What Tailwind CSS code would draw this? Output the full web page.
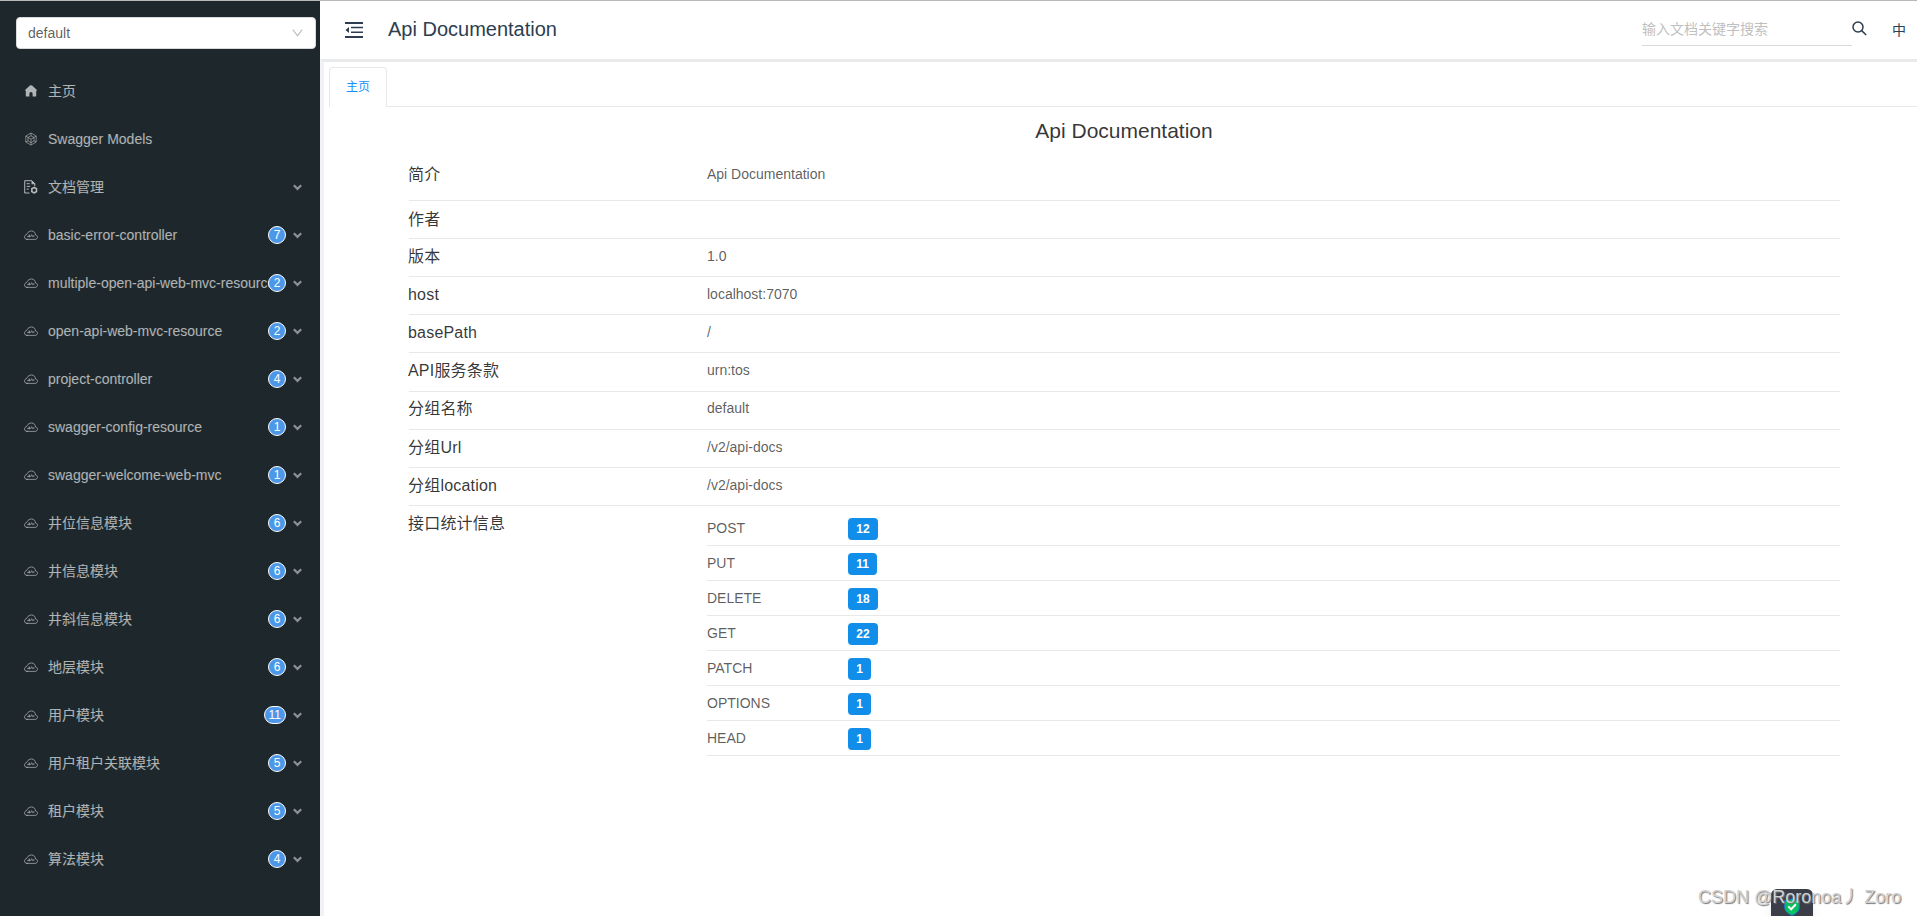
<!DOCTYPE html>
<html lang="zh">
<head>
    <meta charset="UTF-8">
    <meta name="viewport" content="width=device-width, initial-scale=1.0">
    <title>Api Documentation</title>
    <script src="https://cdn.jsdelivr.net/npm/@tailwindcss/browser@4"></script>
</head>
<body class="relative h-[916px] overflow-hidden border-t border-[#b8b8b8] bg-white font-['Liberation_Sans','Noto_Sans_CJK_SC',sans-serif] text-sm text-black/65">
    <svg class="hidden">
        <symbol id="i-cloud" viewBox="0 0 14 10" fill="none" stroke="currentColor" stroke-linecap="round" stroke-linejoin="round">
            <path stroke-width=".9" d="M3 9.400h8c1.400 0 2.500-.9 2.500-2.200 0-1.200-.8-2-2-2.200C11.400 2.500 9.700 1 7.400 1c-2 0-3.300.9-3.900 2.300-.7.1-1 .700-1 1.400C1.300 5 .5 5.900.5 7.100.5 8.500 1.600 9.400 3 9.400z"/>
            <path stroke-width=".8" d="M4 6.700 5.600 4.700v2M4 6.700h1.600M6.700 6.700 7.700 4.700l1 2M9.800 5.400v1.300"/>
        </symbol>
        <symbol id="i-down" viewBox="0 0 9 7" fill="none" stroke="currentColor">
            <path stroke-width="2.200" d="M.8 1.200l3.700 3.700 3.700-3.700"/>
        </symbol>
        <symbol id="i-home" viewBox="0 0 12 12" fill="currentColor">
            <path d="M4.900.6a1.800 1.800 0 0 1 2.200 0L11.400 4.500c.5.500.6.800.2 1.200l-.4.200v4.800c0 .5-.4.900-.9.900H7.600V8.600a1.600 1.600 0 0 0-3.200 0v3H1.700a.9.900 0 0 1-.9-.9V5.900l-.4-.2C0 5.300.1 5 .6 4.500z"/>
        </symbol>
        <symbol id="i-models" viewBox="0 0 12 14" fill="none" stroke="currentColor" stroke-width=".8" stroke-linejoin="round">
            <path d="M6 1 11.200 4v6L6 13 .8 10V4z"/>
            <path d="M6 3.800 9 5.500v3.400L6 10.600 3 8.900V5.500zM3 5.500l3 1.700 3-1.700M6 7.200v3.400M6 1v2.800M11.200 4 9 5.500M.8 4 3 5.500M.8 10 3 8.900M11.200 10 9 8.900M6 13v-2.400"/>
        </symbol>
        <symbol id="i-doc" viewBox="0 0 14 14" fill="none" stroke="currentColor">
            <path d="M5.500 13H.7V.7h7.100l3 3v2.500"/>
            <path fill="currentColor" stroke="none" d="M7.500.4 11.300 4.200H7.500z"/>
            <path d="M2.600 3.700h3.200M2.600 6.400h3.600M2.600 9.100h2.200"/>
            <circle cx="10.200" cy="10.200" r="2.400" stroke-width="1.500"/>
            <path d="M10.200 6.700v1M10.200 12.700v1M7.200 8.500l.8.500M12.400 11.400l.8.500M7.200 11.900l.8-.5M12.400 9l.8-.5"/>
        </symbol>
    </svg>

    <div class="flex h-[915px]">
        <!-- side menu -->
        <aside class="w-80 shrink-0 bg-[#1e282c]">
            <div class="mt-4 ml-4 flex h-8 w-[300px] items-center justify-between rounded border border-[#d9d9d9] bg-white pr-3 pl-[11px]">
                <span>default</span>
                <svg class="h-2 w-[11px] text-black/25" viewBox="0 0 11 8" fill="none" stroke="currentColor" stroke-width="1.200"><path d="M.8.7l4.700 6L10.200.7"/></svg>
            </div>
            <ul id="menu" class="mt-[18px] text-white/65"></ul>
        </aside>

        <main class="flex min-w-0 flex-1 flex-col">
            <header class="flex h-[58px] shrink-0 items-center pl-[25px] text-[#2c3e50]">
                <svg class="h-4 w-[18px]" viewBox="0 0 18 16" fill="currentColor">
                    <path d="M0 0h18v2H0zM6 4.700h12v1.600H6zM6 9.500h12v1.600H6zM0 14h18v2H0zM.5 8 4 5v6z"/>
                </svg>
                <h1 class="mb-0.5 ml-[25px] text-xl">Api Documentation</h1>
                <div class="mb-0.5 ml-auto h-[33px] w-[210px] border-b border-[#d9d9d9] pt-1.5 leading-[21px] text-[#bfbfbf]">输入文档关键字搜索</div>
                <svg class="mb-1 h-[15px] w-[15px]" viewBox="0 0 15 15" fill="none" stroke="currentColor" stroke-width="1.500"><circle cx="6" cy="6" r="5"/><path d="M9.600 9.600l4.600 4.400"/></svg>
                <span class="mr-[11px] ml-[25px] text-sm">中</span>
            </header>

            <div class="flex-1 border-t-3 border-l-4 border-t-[#e8eaec] border-l-[#f0f2f5]">
                <div class="flex h-[45px] pt-[5px] pl-[5px]">
                    <div class="h-10 w-[58px] rounded-t border border-b-0 border-[#e8e8e8] pt-2.5 text-center text-xs leading-[18px] text-[#1890ff]">主页</div>
                    <div class="flex-1 border-b border-[#e8e8e8]"></div>
                </div>
                <div class="ml-[85px] w-[1431px]">
                    <h2 class="h-[49px] pt-[9px] pr-px text-center text-[21px] leading-[30px] text-black/80">Api Documentation</h2>
                    <div id="info"></div>
                    <div class="flex">
                        <div class="-ml-px w-[299px] pt-[6px] text-base tracking-[.2px] text-black/80">接口统计信息</div>
                        <div id="stats" class="flex-1 pt-[5px]"></div>
                    </div>
                </div>
            </div>
        </main>
    </div>

    <!-- floating shield and watermark -->
    <div class="absolute top-[888px] left-[1771px] flex h-[27px] w-[42px] justify-center overflow-hidden rounded-t-md bg-[#3b3d49] pt-[9px] shadow-lg">
        <svg class="h-[18px] w-4 shrink-0" viewBox="0 0 16 18"><path fill="#07c160" stroke="#1673d8" d="M8 .7c2 1.300 4.500 1.800 7.300 1.800V9c0 4-3 6.800-7.300 8.400C3.700 15.800.7 13 .7 9V2.500C3.500 2.500 6 2 8 .7z"/><path fill="none" stroke="#fff" stroke-width="2" d="M4.300 8.400l2.800 2.900 4.800-5"/></svg>
    </div>
    <div class="absolute top-[883px] left-[1698px] text-lg leading-[26px] whitespace-nowrap text-[#d2d2d2] [text-shadow:1px_1px_1px_#777]">CSDN @Roronoa丿 Zoro</div>

    <script>
        // [label, icon, badge]
        const menu = [
            ['主页', 'home'],
            ['Swagger Models', 'models'],
            ['文档管理', 'doc', ''],
            ['basic-error-controller', 'cloud', 7],
            ['multiple-open-api-web-mvc-resource', 'cloud', 2],
            ['open-api-web-mvc-resource', 'cloud', 2],
            ['project-controller', 'cloud', 4],
            ['swagger-config-resource', 'cloud', 1],
            ['swagger-welcome-web-mvc', 'cloud', 1],
            ['井位信息模块', 'cloud', 6],
            ['井信息模块', 'cloud', 6],
            ['井斜信息模块', 'cloud', 6],
            ['地层模块', 'cloud', 6],
            ['用户模块', 'cloud', 11],
            ['用户租户关联模块', 'cloud', 5],
            ['租户模块', 'cloud', 5],
            ['算法模块', 'cloud', 4]
        ]
        const icons = {
            home: '<svg class="h-3 w-3"><use href="#i-home"/></svg>',
            models: '<svg class="h-3.5 w-3 opacity-80"><use href="#i-models"/></svg>',
            doc: '<svg class="h-3.5 w-3.5"><use href="#i-doc"/></svg>',
            cloud: '<svg class="h-2.5 w-3.5 opacity-80"><use href="#i-cloud"/></svg>'
        }
        document.getElementById('menu').innerHTML = menu.map(([label, icon, badge]) => `
            <li class="flex h-12 items-center pr-[18px] pl-6">
                <span class="mr-2.5 flex w-3.5 shrink-0 justify-center">${icons[icon]}</span>
                <span class="w-0 flex-1 overflow-hidden whitespace-nowrap">${label}</span>
                ${badge ? `<span class="mr-[7px] -ml-1 flex h-[18px] min-w-[18px] items-center justify-center rounded-full border border-white bg-[#4c97e8] px-1 text-xs text-white">${badge}</span>` : ''}
                ${badge !== undefined ? '<svg class="h-[7px] w-[9px] shrink-0 opacity-75"><use href="#i-down"/></svg>' : ''}
            </li>`).join('')

        const info = [
            ['简介', 'Api Documentation', 'h-[45px] pt-[6px]'],
            ['作者', '', 'h-[38px] pt-[6px]'],
            ['版本', '1.0', 'h-[38px] pt-[5px]'],
            ['host', 'localhost:7070', 'h-[38px] pt-[5px]'],
            ['basePath', '/', 'h-[38px] pt-[5px]'],
            ['API服务条款', 'urn:tos', 'h-[39px] pt-[5px]'],
            ['分组名称', 'default', 'h-[38px] pt-[4px]'],
            ['分组Url', '/v2/api-docs', 'h-[38px] pt-[5px]'],
            ['分组location', '/v2/api-docs', 'h-[38px] pt-[5px]']
        ]
        document.getElementById('info').innerHTML = info.map(([k, v, h]) => `
            <div class="flex border-b border-[#e8e8e8] ${h}">
                <div class="-ml-px w-[299px] text-base leading-[25px] tracking-[.2px] text-black/80">${k}</div>
                <div class="leading-6">${v}</div>
            </div>`).join('')

        const stats = [['POST', 12], ['PUT', 11], ['DELETE', 18], ['GET', 22], ['PATCH', 1], ['OPTIONS', 1], ['HEAD', 1]]
        document.getElementById('stats').innerHTML = stats.map(([k, n]) => `
            <div class="flex h-[35px] items-center border-b border-[#e8e8e8]">
                <div class="w-[141px]">${k}</div>
                <div class="mt-px h-[22px] rounded bg-[#108ee9] px-[8.300px] text-xs leading-[22px] font-bold text-white">${n}</div>
            </div>`).join('')
    </script>
</body>
</html>
